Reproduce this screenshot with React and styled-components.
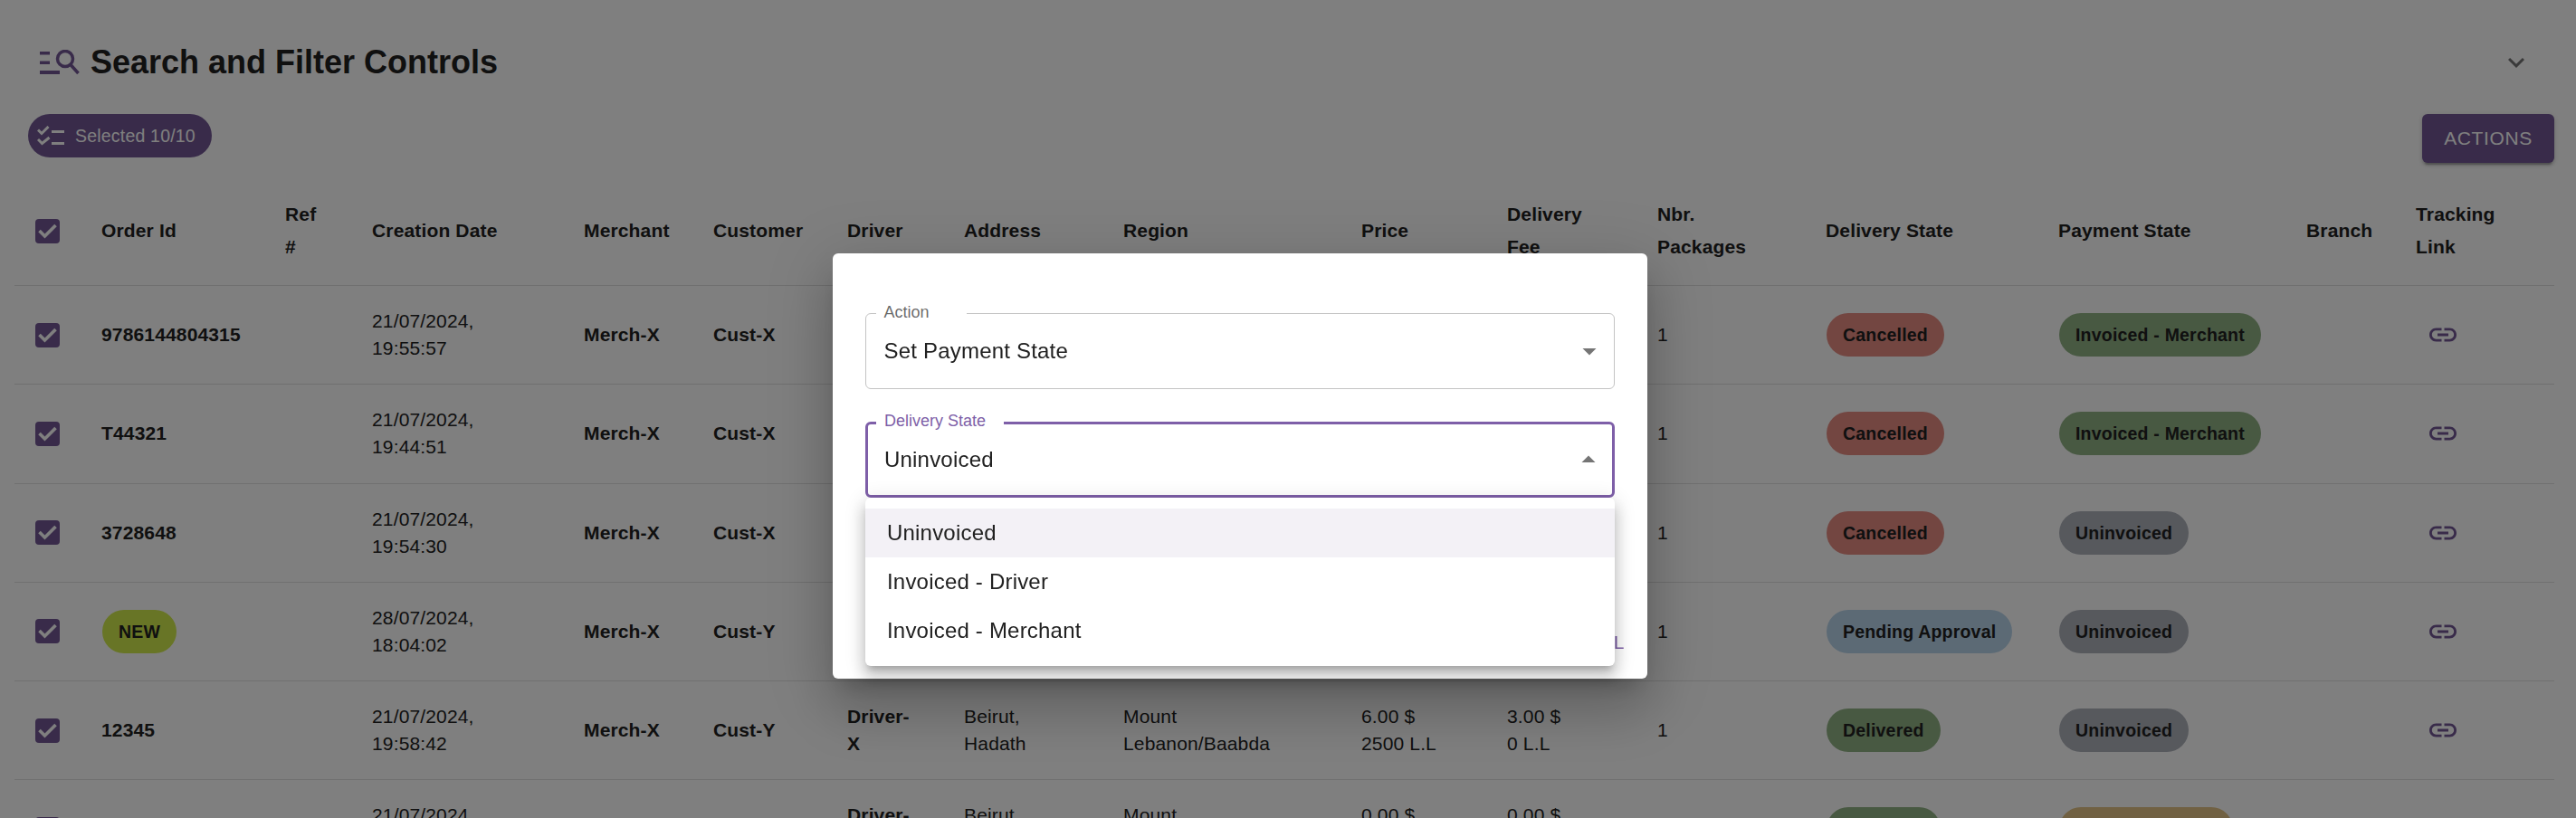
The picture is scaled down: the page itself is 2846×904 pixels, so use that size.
import React from "react";
import styled, { createGlobalStyle } from "styled-components";

const PURPLE = "#7e5fa8";
const PURPLE_DIM = "#725795";

const GlobalStyle = createGlobalStyle`
    html, body {
        margin: 0;
        height: 904px;
        overflow: hidden;
        background: #fff;
        font-family: "Liberation Sans", Arial, sans-serif;
        color: #212121;
    }
`
const Page = styled.div`
    width: 2846px;
    height: 904px;
    box-sizing: border-box;
    padding: 33px 24px 0 16px;
    overflow: hidden;
`
const TitleRow = styled.div`
    height: 72px;
    display: flex;
    align-items: center;
    padding: 0 24px 0 28px;
    gap: 12px;
`
const Title = styled.h1`
    margin: 0;
    font-size: 36px;
    line-height: 44px;
    font-weight: 700;
    flex: 1;
`
const ChevronIcon = styled.svg`
    width: 36px;
    height: 36px;
    fill: rgba(0, 0, 0, .54);
`
const Toolbar = styled.div`
    height: 54px;
    width: 2806px;
    margin: 21px 0 15px;
    padding-left: 15px;
    box-sizing: border-box;
    display: flex;
    justify-content: space-between;
    align-items: flex-start;
`
const SelectedChip = styled.div`
    height: 48px;
    border-radius: 24px;
    background: ${PURPLE_DIM};
    color: #fff;
    display: flex;
    align-items: center;
    gap: 12px;
    padding: 0 18px 0 10px;
    font-size: 19.5px;
    letter-spacing: .2px;
`
const ActionsButton = styled.button`
    height: 54px;
    width: 146px;
    border: 0;
    border-radius: 6px;
    background: ${PURPLE_DIM};
    color: #fff;
    font-family: inherit;
    font-size: 21px;
    letter-spacing: .6px;
    box-shadow: 0 4.5px 1.5px -3px rgba(0,0,0,.2), 0 3px 3px 0 rgba(0,0,0,.14), 0 1.5px 7.5px 0 rgba(0,0,0,.12);
`
const Table = styled.table`
    width: 2806px;
    table-layout: fixed;
    border-collapse: collapse;
    font-size: 21px;
    line-height: 30.12px;
    letter-spacing: .15px;
`
const Col = styled.col`
    width: ${p => p.$w}px;
`
const HeadCell = styled.th`
    padding: 24px;
    text-align: left;
    vertical-align: middle;
    font-weight: 700;
    line-height: 36px;
    border-bottom: 1.5px solid #e0e0e0;
`
const Cell = styled.td`
    padding: 24px;
    vertical-align: middle;
    font-weight: ${p => (p.$bold ? 700 : 400)};
    border-bottom: 1.5px solid #e0e0e0;
`
const CheckHead = styled(HeadCell)`
    padding: 0 0 0 23px;
`
const CheckCell = styled(Cell)`
    padding: 0 0 0 23px;
`
const CheckIcon = styled.svg`
    display: block;
    width: 27px;
    height: 27px;
`
const Pill = styled.span`
    display: inline-flex;
    align-items: center;
    height: 48px;
    margin-left: 1px;
    padding: 0 18px;
    border-radius: 24px;
    font-size: 19.5px;
    font-weight: 700;
    letter-spacing: .2px;
    white-space: nowrap;
    background: ${p => p.$bg};
`
const LinkIcon = styled.svg`
    display: block;
    width: 36px;
    height: 36px;
    margin-left: 12px;
    fill: ${PURPLE_DIM};
`
const Backdrop = styled.div`
    position: fixed;
    inset: 0;
    background: rgba(0, 0, 0, .5);
`
const Dialog = styled.div`
    position: absolute;
    left: 920px;
    top: 280px;
    width: 900px;
    height: 470px;
    box-sizing: border-box;
    padding: 66px 36px 0;
    background: #fff;
    border-radius: 6px;
    box-shadow: 0 16px 22px -10px rgba(0,0,0,.2), 0 36px 57px 4px rgba(0,0,0,.14), 0 14px 69px 12px rgba(0,0,0,.12);
    display: flex;
    flex-direction: column;
    gap: 36px;
`
const Field = styled.div`
    position: relative;
    height: 84px;
    box-sizing: border-box;
    display: flex;
    align-items: center;
    justify-content: space-between;
    padding: 0 ${p => (p.$focused ? 8 : 9.5)}px 0 ${p => (p.$focused ? 18 : 19.5)}px;
    font-size: 24px;
    letter-spacing: .2px;
    border-radius: 6px;
    border: ${p => (p.$focused ? `3px solid ${PURPLE}` : "1.5px solid #c4c4c4")};
`
const FieldLabel = styled.label`
    position: absolute;
    top: ${p => (p.$focused ? -16 : -14.5)}px;
    left: ${p => (p.$focused ? 9 : 10.5)}px;
    padding: 0 ${p => p.$notch}px 0 9px;
    background: #fff;
    font-size: 18px;
    line-height: 24px;
    letter-spacing: 0;
    color: ${p => (p.$focused ? PURPLE : "rgba(0, 0, 0, .6)")};
`
const ArrowIcon = styled.svg`
    width: 36px;
    height: 36px;
    fill: rgba(0, 0, 0, .54);
`
const Menu = styled.ul`
    position: absolute;
    z-index: 2;
    top: 81px;
    left: -3px;
    right: -3px;
    margin: 0;
    padding: 12px 0;
    list-style: none;
    background: #fff;
    border-radius: 6px;
    box-shadow: 0 7.5px 7.5px -4.5px rgba(0,0,0,.2), 0 12px 15px 1.5px rgba(0,0,0,.14), 0 4.5px 21px 3px rgba(0,0,0,.12);
`
const MenuItem = styled.li`
    height: 54px;
    display: flex;
    align-items: center;
    padding-left: 24px;
    font-size: 24px;
    background: ${p => (p.$selected ? "#f3f1f6" : "transparent")};
`
const DialogActions = styled.div`
    position: relative;
    margin: 106px -11px 0 0;
    display: flex;
    justify-content: flex-end;
    gap: 24px;
`
const TextButton = styled.button`
    padding: 0;
    border: 0;
    background: transparent;
    color: ${PURPLE};
    font-family: inherit;
    font-size: 21px;
    line-height: 36px;
    letter-spacing: .6px;
`

const COLUMNS = [72, 203, 96, 234, 143, 148, 129, 176, 263, 161, 166, 186, 257, 274, 121, 177];

const HEADERS = ["Order Id", "Ref #", "Creation Date", "Merchant", "Customer", "Driver", "Address", "Region", "Price", "Delivery Fee", "Nbr. Packages", "Delivery State", "Payment State", "Branch", "Tracking Link"];

const STATE_COLORS = {
    "Cancelled": "#e68c83",
    "Pending Approval": "#b8d4eb",
    "Delivered": "#91b285",
    "Uninvoiced": "#aeb2bb",
    "Invoiced - Merchant": "#91b285",
    "Invoiced - Driver": "#e2c386",
};

const ROWS = [
    { id: "9786144804315", date: "21/07/2024, 19:55:57", customer: "Cust-X", price: ["6.00 $", "2500 L.L"], fee: ["3.00 $", "0 L.L"], delivery: "Cancelled", payment: "Invoiced - Merchant" },
    { id: "T44321", date: "21/07/2024, 19:44:51", customer: "Cust-X", price: ["6.00 $", "2500 L.L"], fee: ["3.00 $", "0 L.L"], delivery: "Cancelled", payment: "Invoiced - Merchant" },
    { id: "3728648", date: "21/07/2024, 19:54:30", customer: "Cust-X", price: ["6.00 $", "2500 L.L"], fee: ["3.00 $", "0 L.L"], delivery: "Cancelled", payment: "Uninvoiced" },
    { isNew: true, date: "28/07/2024, 18:04:02", customer: "Cust-Y", price: ["6.00 $", "2500 L.L"], fee: ["3.00 $", "0 L.L"], delivery: "Pending Approval", payment: "Uninvoiced" },
    { id: "12345", date: "21/07/2024, 19:58:42", customer: "Cust-Y", price: ["6.00 $", "2500 L.L"], fee: ["3.00 $", "0 L.L"], delivery: "Delivered", payment: "Uninvoiced" },
    { id: "12346", date: "21/07/2024, 19:58:10", customer: "Cust-Y", price: ["0.00 $", "0 L.L"], fee: ["0.00 $", "0 L.L"], delivery: "Delivered", payment: "Invoiced - Driver" },
];

function Checked() {
    return (
        <CheckIcon viewBox="0 0 27 27">
            <rect width="27" height="27" rx="4" fill={PURPLE_DIM} />
            <path d="M4.5 13l6 6L22.5 7" fill="none" stroke="#fff" strokeWidth="3.6" />
        </CheckIcon>
    )
}

function SelectField({ label, value, focused, notch, open, children }) {
    return (
        <Field $focused={focused}>
            <FieldLabel $focused={focused} $notch={notch}>{label}</FieldLabel>
            <span>{value}</span>
            <ArrowIcon viewBox="0 0 24 24"><path d={open ? "M7 14l5-5 5 5z" : "M7 10l5 5 5-5z"} /></ArrowIcon>
            {children}
        </Field>
    )
}

export default function App() {
    return (
        <>
            <GlobalStyle />
            <Page>
                <TitleRow>
                    <svg width="44" height="28" viewBox="0 0 44 28" fill={PURPLE_DIM}>
                        <rect x="0" y="2" width="11" height="3.5" />
                        <rect x="0" y="12.5" width="11" height="3.5" />
                        <rect x="0" y="23" width="22" height="4" />
                        <circle cx="28" cy="10" r="8.5" fill="none" stroke={PURPLE_DIM} strokeWidth="3.5" />
                        <path d="M34 16.5l8.5 9.5" fill="none" stroke={PURPLE_DIM} strokeWidth="3.5" />
                    </svg>
                    <Title>Search and Filter Controls</Title>
                    <ChevronIcon viewBox="0 0 24 24"><path d="M16.59 8.59 12 13.17 7.41 8.59 6 10l6 6 6-6z" /></ChevronIcon>
                </TitleRow>
                <Toolbar>
                    <SelectedChip>
                        <svg width="30" height="22" viewBox="0 0 30 22" fill="none" stroke="#fff" strokeWidth="3">
                            <path d="M1 4.5l4 4L12.5 1" />
                            <path d="M1 15l4.5 4.5L13.5 13" />
                            <path d="M16 6.5h14M16 19.5h14" />
                        </svg>
                        Selected 10/10
                    </SelectedChip>
                    <ActionsButton>ACTIONS</ActionsButton>
                </Toolbar>
                <Table>
                    <colgroup>
                        {COLUMNS.map((w, i) => <Col key={i} $w={w} />)}
                    </colgroup>
                    <thead>
                        <tr>
                            <CheckHead><Checked /></CheckHead>
                            {HEADERS.map(h => <HeadCell key={h}>{h}</HeadCell>)}
                        </tr>
                    </thead>
                    <tbody>
                        {ROWS.map((row, i) => (
                            <tr key={i}>
                                <CheckCell><Checked /></CheckCell>
                                <Cell $bold>{row.isNew ? <Pill $bg="#d0ea4c">NEW</Pill> : row.id}</Cell>
                                <Cell />
                                <Cell>{row.date}</Cell>
                                <Cell $bold>Merch-X</Cell>
                                <Cell $bold>{row.customer}</Cell>
                                <Cell $bold>Driver-X</Cell>
                                <Cell>Beirut, Hadath</Cell>
                                <Cell>Mount Lebanon/Baabda</Cell>
                                <Cell>{row.price[0]}<br />{row.price[1]}</Cell>
                                <Cell>{row.fee[0]}<br />{row.fee[1]}</Cell>
                                <Cell>1</Cell>
                                <Cell><Pill $bg={STATE_COLORS[row.delivery]}>{row.delivery}</Pill></Cell>
                                <Cell><Pill $bg={STATE_COLORS[row.payment]}>{row.payment}</Pill></Cell>
                                <Cell />
                                <Cell>
                                    <LinkIcon viewBox="0 0 24 24">
                                        <path d="M3.9 12c0-1.71 1.39-3.1 3.1-3.1h4V7H7c-2.76 0-5 2.24-5 5s2.24 5 5 5h4v-1.9H7c-1.71 0-3.1-1.39-3.1-3.1zM8 13h8v-2H8v2zm9-6h-4v1.9h4c1.71 0 3.1 1.39 3.1 3.1s-1.39 3.1-3.1 3.1h-4V17h4c2.76 0 5-2.24 5-5s-2.24-5-5-5z" />
                                    </LinkIcon>
                                </Cell>
                            </tr>
                        ))}
                    </tbody>
                </Table>
            </Page>
            <Backdrop />
            <Dialog>
                <SelectField label="Action" value="Set Payment State" notch={41} />
                <SelectField label="Delivery State" value="Uninvoiced" notch={20} focused open>
                    <Menu>
                        <MenuItem $selected>Uninvoiced</MenuItem>
                        <MenuItem>Invoiced - Driver</MenuItem>
                        <MenuItem>Invoiced - Merchant</MenuItem>
                    </Menu>
                </SelectField>
                <DialogActions>
                    <TextButton>SUBMIT</TextButton>
                    <TextButton>CANCEL</TextButton>
                </DialogActions>
            </Dialog>
        </>
    )
}
